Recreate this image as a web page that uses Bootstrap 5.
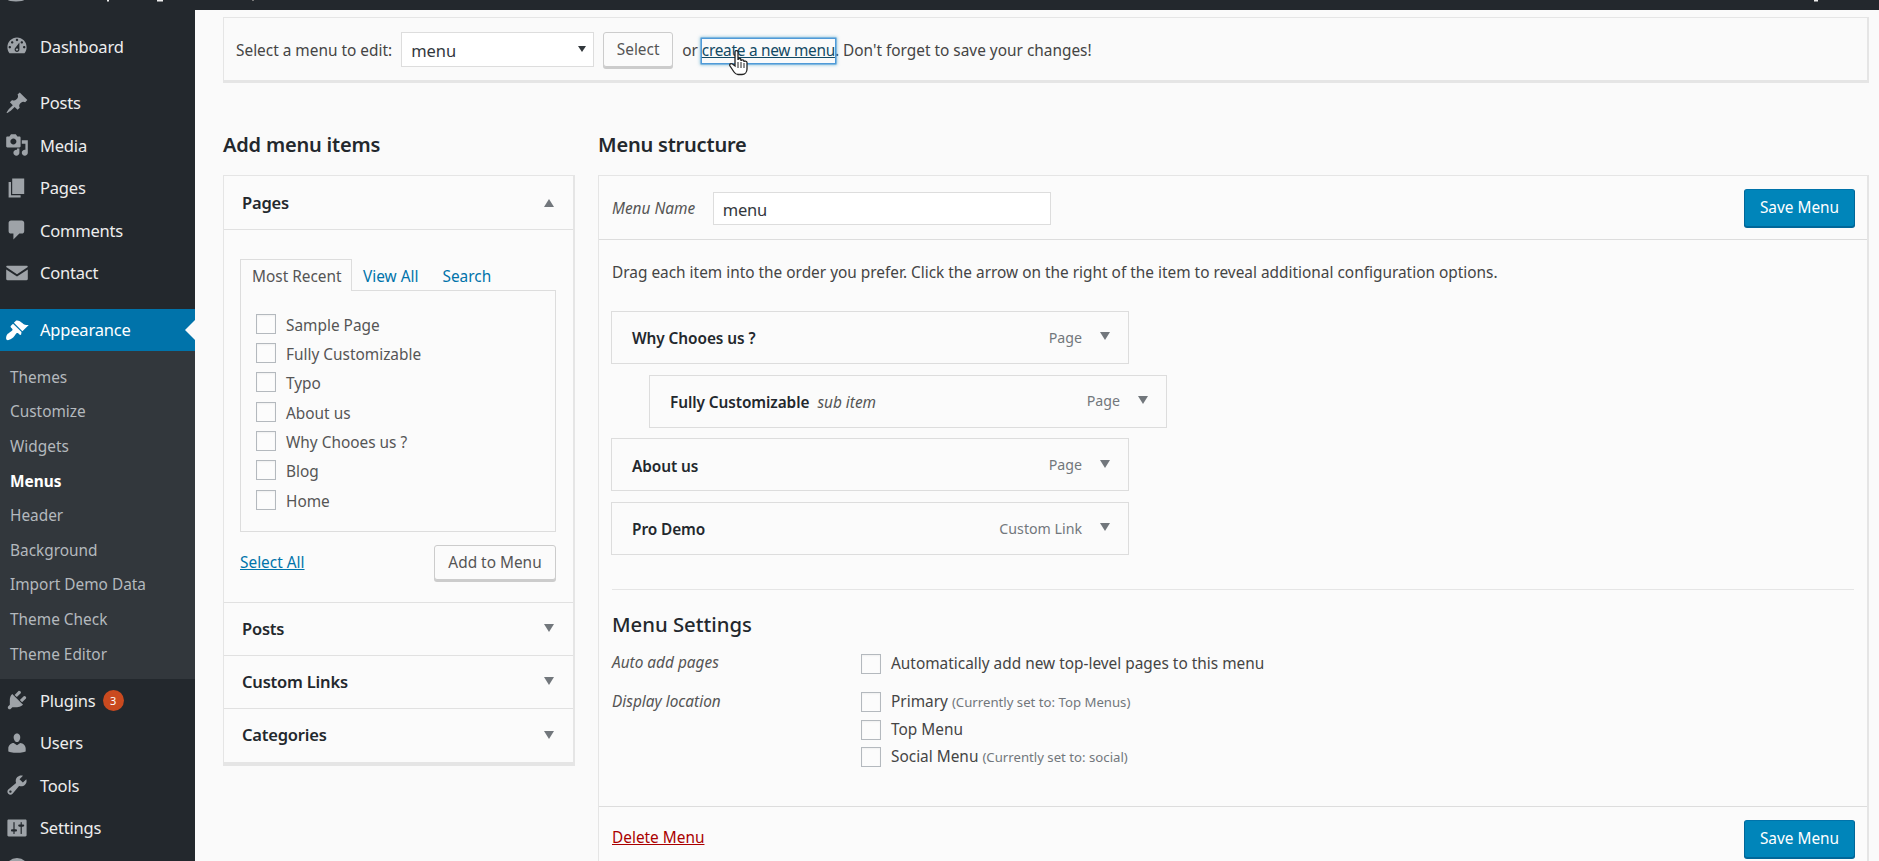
<!DOCTYPE html>
<html lang="en">
<head>
<meta charset="utf-8">
<title>Menus</title>
<link href="https://cdn.jsdelivr.net/npm/bootstrap@5.3.0/dist/css/bootstrap.min.css" rel="stylesheet">
<style>
:root{--ff:"Noto Sans","Open Sans",sans-serif;}
html,body{height:100%;}
body{font-family:var(--ff);font-size:15.4px;color:#444;background:#fafafa;line-height:1.3;}
.wp-top{height:10px;background:#23282d;flex:none;overflow:hidden;}
.wp-top svg{display:block;width:100%;height:10px;}
.wp-side{width:195px;background:#23282d;color:#eee;padding-top:15px;font-size:16.5px;letter-spacing:-.2px;}
.side-row{display:flex;align-items:center;height:42.5px;padding-left:5px;gap:11px;}
.side-row svg{width:24px;height:24px;fill:#9ea3a8;flex:none;}
.side-gap1{margin-top:14px;}
.side-cur{margin-top:14.5px;height:42px;background:#0073aa;color:#fff;position:relative;}
.side-cur svg{fill:#fff;}
.side-cur::after{content:"";position:absolute;right:0;top:50%;margin-top:-10px;border:10px solid transparent;border-right-color:#fafafa;border-left:0;}
.side-sub{background:#32373c;padding:10px 0 7.4px 10px;font-size:15.4px;letter-spacing:0;color:#b4b9be;}
.side-sub div{height:34.6px;display:flex;align-items:center;}
.side-sub .on{color:#fff;font-weight:700;}
.plug-count{display:inline-block;width:21px;height:21px;border-radius:50%;background:#ca4a1f;color:#fff;font-size:11px;line-height:21px;text-align:center;margin-left:-4px;letter-spacing:0;}
.wp-main{min-width:0;padding:7px 10px 0 28px;background:#fafafa;}
.box-top{height:66px;border:1px solid #e5e5e5;border-bottom-width:3px;border-right-width:2px;padding:0 12px;}
.txt-low{padding-top:5px;}
.sel-wrap{position:relative;width:193px;margin-left:9px;}
.sel-wrap::after{content:"";position:absolute;right:8px;top:14px;border-style:solid;border-width:6px 4px 0;border-color:#32373c transparent transparent;}
.sel-wrap select{width:100%;height:35px;appearance:none;border:1px solid #ddd;background:#fff;padding:4px 9px 0;color:#32373c;font-size:16.5px;border-radius:0;font-family:var(--ff);}
.btn-wp{font-size:15.4px;color:#555;background:#fbfbfb;border:1px solid #ccc;border-radius:3px;box-shadow:0 2px 0 #ccc;line-height:1.2;padding:2px 0 0;display:flex;align-items:center;justify-content:center;}
.btn-sel{width:70px;height:35px;margin:0 9px;}
.link-focus{color:#124964;text-decoration:underline;box-shadow:0 0 0 1.5px #4f9ad8,0 0 3px 2px rgba(30,140,190,.5);margin:0 0 0 4px;position:relative;padding:1px 0 2px;letter-spacing:-.27px;}
.hand{position:absolute;left:27px;top:11px;width:20px;height:26px;}
.col-l{width:352px;flex:none;}
.col-r{min-width:0;flex:1;margin-left:23px;}
.h-sec{font-size:20px;font-weight:600;color:#23282d;margin:0;height:92px;padding-top:49px;line-height:26px;letter-spacing:-.2px;}
.panel-l{border:1px solid #e5e5e5;border-right-width:2px;border-bottom-width:4px;background:#fbfbfb;}
.acc-head{height:53px;display:flex;align-items:center;justify-content:space-between;padding:0 19px 1.5px 18px;font-size:16.5px;font-weight:600;letter-spacing:-.2px;color:#23282d;border-bottom:1px solid #e1e1e1;}
.acc-head:last-child{border-bottom:0;}
.acc-pages{height:54px;padding-bottom:0;}
.tri{display:inline-block;border-style:solid;border-width:8px 5px 0;border-color:#72777c transparent transparent;}
.tri-up{border-width:0 5px 8px;border-color:transparent transparent #72777c;}
.acc-body{padding:29px 17px 21px 16px;border-bottom:1px solid #e1e1e1;height:373px;}
.tab-row{display:flex;height:31px;}
.tab-on{width:112px;border:1px solid #ddd;border-bottom:0;background:#fbfbfb;padding:4px 0 0 11px;display:flex;align-items:center;color:#555;margin-bottom:-1px;height:32px;position:relative;z-index:1;}
.tab-off{color:#0073aa;display:flex;align-items:center;padding-top:5px;}
.tab-gap1{margin-left:11px;}
.tab-gap2{margin-left:24px;}
.tab-box{height:242px;border:1px solid #ddd;padding:18px 15px 0;}
.chk-row{display:flex;align-items:center;height:29.33px;gap:10px;color:#555;padding-top:4px;}
.chk-row .cb{margin-top:-4px;}
.cb{appearance:none;-webkit-appearance:none;width:20px;height:20px;border:1px solid #b4b9be;background:#fcfcfc;margin:0;flex:none;box-shadow:inset 0 1px 2px rgba(0,0,0,.05);display:block;}
.sel-foot{margin-top:13px;}
.wp-link{color:#0073aa;text-decoration:underline;padding-top:2px;}
.btn-add{width:122px;height:35px;}
.panel-r{border:1px solid #e5e5e5;border-right-width:2px;border-bottom:0;background:#fbfbfb;}
.mh{height:64px;display:flex;align-items:center;padding:0 12px 0 13px;border-bottom:1px solid #ddd;justify-content:space-between;}
.it{font-style:italic;color:#555;}
.mn-lbl{padding-top:3px;}
.inp{width:338px;height:33px;border:1px solid #ddd;background:#fff;padding:2px 9px 0;font-size:16.5px;color:#32373c;margin:2px 0 0 17.5px;font-family:var(--ff);border-radius:0;letter-spacing:-.2px;}
.btn-save{width:111px;height:38px;background:#0085ba;border:1px solid #006799;border-color:#0073aa #006799 #006799;color:#fff;border-radius:3px;box-shadow:0 1px 0 #006799;font-size:15.4px;padding:0;}
.mb-body{padding:0 13px;height:566px;}
.drag{padding-top:22.5px;height:71px;line-height:20px;}
.m-it{width:518px;height:53px;border:1px solid #ddd;display:flex;align-items:center;justify-content:space-between;padding:0 18px 0 20px;margin:0 0 10.67px -1px;background:#fbfbfb;}
.m-it.sub-it{margin-left:37px;}
.m-it b{font-weight:600;color:#23282d;letter-spacing:-.08px;}
.m-tt{padding-top:4px;}
.m-r{display:flex;align-items:center;gap:18px;color:#72777c;font-size:14.2px;padding-top:1px;}
.m-r .tri{margin-top:-3px;}
.hr-l{border-top:1px solid #e5e5e5;margin-top:34px;}
.h-set{font-size:20.3px;font-weight:500;color:#23282d;margin:21px 0 0;line-height:26px;height:39px;}
.set-row{display:flex;}
.set-row-gap{margin-bottom:11px;}
.set-lbl{width:249px;flex:none;padding-top:3px;}
.set-opt{display:flex;align-items:center;gap:10px;height:27.5px;}
.small-note{font-size:13.2px;color:#72777c;}
.foot-r{height:64px;border-top:1px solid #ddd;display:flex;justify-content:space-between;align-items:center;padding:0 12px 0 13px;}
.del-link{color:#a00;text-decoration:underline;}
</style>
</head>
<body class="d-flex flex-column overflow-hidden">
<div class="wp-top"><svg viewBox="0 0 1879 10" preserveAspectRatio="none"><ellipse cx="16" cy="0" rx="8" ry="1.500" fill="#9ea3a8"/><rect x="107" y="0" width="2" height="1.500" fill="#eee"/><rect x="157" y="0" width="6" height="1.500" fill="#eee"/><rect x="252" y="0" width="2" height="1" fill="#777"/><rect x="1814" y="0" width="4" height="1.500" fill="#eee"/></svg></div>
<div class="d-flex flex-grow-1 overflow-hidden">
<nav class="wp-side flex-shrink-0">
<div class="side-row"><svg viewBox="0 0 20 20"><path d="M3.76 16h12.48c1.1-1.37 1.76-3.11 1.76-5 0-4.42-3.58-8-8-8s-8 3.58-8 8c0 1.89.66 3.63 1.76 5zM10 4c.55 0 1 .45 1 1s-.45 1-1 1-1-.45-1-1 .45-1 1-1zM6 6c.55 0 1 .45 1 1s-.45 1-1 1-1-.45-1-1 .45-1 1-1zm8 0c.55 0 1 .45 1 1s-.45 1-1 1-1-.45-1-1 .45-1 1-1zm-5.37 5.55L12 7v6c0 1.1-.9 2-2 2s-2-.9-2-2c0-.57.24-1.08.63-1.45zM4 10c.55 0 1 .45 1 1s-.45 1-1 1-1-.45-1-1 .45-1 1-1zm12 0c.55 0 1 .45 1 1s-.45 1-1 1-1-.45-1-1 .45-1 1-1zm-5 3c0-.55-.45-1-1-1s-1 .45-1 1 .45 1 1 1 1-.45 1-1z"/></svg>Dashboard</div>
<div class="side-row side-gap1"><svg viewBox="0 0 20 20"><path d="M10.44 3.02l1.82-1.82 6.36 6.35-1.83 1.82c-1.05-.68-2.48-.57-3.41.36l-.75.75c-.92.93-1.04 2.35-.35 3.41l-1.83 1.82-2.41-2.41-2.8 2.79c-.42.42-3.38 2.71-3.8 2.29s1.86-3.39 2.28-3.81l2.79-2.79L4.1 9.36l1.83-1.82c1.05.69 2.48.57 3.4-.36l.75-.75c.93-.92 1.05-2.35.36-3.41z"/></svg>Posts</div>
<div class="side-row"><svg viewBox="0 0 20 20"><path d="M13 11V4c0-.55-.45-1-1-1h-1.67L9 1H5L3.67 3H2c-.55 0-1 .45-1 1v7c0 .55.45 1 1 1h10c.55 0 1-.45 1-1zM7 4.5c1.38 0 2.5 1.12 2.5 2.5S8.38 9.5 7 9.5 4.5 8.38 4.5 7 5.62 4.5 7 4.5zM14 6h5v10.5c0 1.38-1.12 2.5-2.5 2.5S14 17.88 14 16.5s1.12-2.5 2.5-2.5c.17 0 .34.02.5.05V9h-3V6zm-4 8.05V13h2v3.5c0 1.38-1.12 2.5-2.5 2.5S7 17.88 7 16.5 8.12 14 9.5 14c.17 0 .34.02.5.05z"/></svg>Media</div>
<div class="side-row"><svg viewBox="0 0 20 20"><path d="M6 15V2h10v13H6zm-1 1h8v2H3V5h2v11z"/></svg>Pages</div>
<div class="side-row"><svg viewBox="0 0 20 20"><path d="M5 2h9c1.1 0 2 .9 2 2v7c0 1.1-.9 2-2 2h-2l-5 5v-5H5c-1.1 0-2-.9-2-2V4c0-1.1.9-2 2-2z"/></svg>Comments</div>
<div class="side-row"><svg viewBox="0 0 20 20"><path d="M2 4h16c.6 0 1 .4 1 1L10 11 1 5c0-.6.4-1 1-1zM1 7l9 6 9-6v8c0 .6-.4 1-1 1H2c-.6 0-1-.4-1-1z"/></svg>Contact</div>
<div class="side-row side-cur"><svg viewBox="0 0 20 20"><path d="M14.48 11.06L7.41 3.99l1.5-1.5c.5-.56 2.3-.47 3.51.32 1.21.8 1.43 1.28 2.91 2.1 1.18.64 2.45 1.26 4.45.85zm-.71.71L6.7 4.7 4.93 6.47c-.39.39-.39 1.02 0 1.41l1.06 1.06c.39.39.39 1.03 0 1.42-.6.6-1.43 1.11-2.21 1.69-.35.26-.7.53-1.01.84C1.43 13.23.28 16.99 1.43 18.15c.57.57 1.92.35 3.19-.36.91-.51 1.85-1.25 2.42-1.82.31-.31.58-.66.84-1.01.58-.78 1.09-1.61 1.69-2.21.39-.39 1.03-.39 1.42 0l1.06 1.06c.39.39 1.02.39 1.41 0z"/></svg>Appearance</div>
<div class="side-sub">
<div>Themes</div><div>Customize</div><div>Widgets</div><div class="on">Menus</div><div>Header</div><div>Background</div><div>Import Demo Data</div><div>Theme Check</div><div>Theme Editor</div>
</div>
<div class="side-row"><svg viewBox="0 0 20 20"><path d="M13.11 4.36L9.87 7.6 8 5.73l3.24-3.24c.35-.34 1.05-.2 1.56.32.52.51.66 1.21.31 1.55zm-8 1.77l.91-1.12 9.01 9.01-1.19.84c-.71.71-2.63 1.16-3.82 1.16H6.14L4.9 17.26c-.59.59-1.54.59-2.12 0-.59-.58-.59-1.53 0-2.12l1.24-1.24v-3.88c0-1.13.4-3.19 1.09-3.89zm7.26 3.97l3.24-3.24c.34-.35 1.04-.21 1.55.31.52.51.66 1.21.31 1.55l-3.24 3.25z"/></svg>Plugins <span class="plug-count">3</span></div>
<div class="side-row"><svg viewBox="0 0 20 20"><path d="M10 9.25c-2.27 0-2.73-3.44-2.73-3.44C7 4.02 7.82 2 9.97 2c2.16 0 2.98 2.02 2.71 3.81 0 0-.41 3.44-2.68 3.44zm0 2.57L12.72 10c2.39 0 4.52 2.33 4.52 4.53v2.49s-3.65 1.13-7.24 1.13c-3.65 0-7.24-1.13-7.24-1.13v-2.49c0-2.25 1.94-4.48 4.47-4.48z"/></svg>Users</div>
<div class="side-row"><svg viewBox="0 0 20 20"><path d="M16.68 9.77c-1.34 1.34-3.3 1.67-4.95.99l-5.41 6.52c-.99.99-2.59.99-3.58 0s-.99-2.59 0-3.57l6.52-5.42c-.68-1.65-.35-3.61.99-4.95 1.28-1.28 3.12-1.62 4.72-1.06l-2.89 2.89 2.82 2.82 2.86-2.87c.53 1.58.18 3.39-1.08 4.65zM3.81 16.21c.4.39 1.04.39 1.43 0 .4-.4.4-1.04 0-1.43-.39-.4-1.03-.4-1.43 0-.39.39-.39 1.03 0 1.43z"/></svg>Tools</div>
<div class="side-row"><svg viewBox="0 0 20 20"><path fill-rule="evenodd" d="M18 16V4c0-.55-.45-1-1-1H3c-.55 0-1 .45-1 1v12c0 .55.45 1 1 1h14c.55 0 1-.45 1-1zM8 11h1c.55 0 1 .45 1 1s-.45 1-1 1H8v1.5c0 .28-.22.5-.5.5s-.5-.22-.5-.5V13H6c-.55 0-1-.45-1-1s.45-1 1-1h1V5.5c0-.28.22-.5.5-.5s.5.22.5.5V11zm5-2h-1c-.55 0-1-.45-1-1s.45-1 1-1h1V5.5c0-.28.22-.5.5-.5s.5.22.5.5V7h1c.55 0 1 .45 1 1s-.45 1-1 1h-1v5.5c0 .28-.22.5-.5.5s-.5-.22-.5-.5V9z"/></svg>Settings</div>
<div class="side-row"><svg viewBox="0 0 20 20"><circle cx="10" cy="10" r="10"/></svg></div>
</nav>
<main class="wp-main flex-grow-1 overflow-hidden">
<div class="box-top d-flex align-items-center">
<span class="txt-low">Select a menu to edit:</span>
<div class="sel-wrap"><select aria-label="Select a menu to edit"><option>menu</option></select></div>
<button type="button" class="btn btn-wp btn-sel">Select</button>
<span class="txt-low">or</span>
<span class="txt-low"><a href="#" class="link-focus">create a new menu<svg class="hand" viewBox="0 0 20 26"><path d="M6 2c0-2 3-2 3 0v8c0-2 3-2 3 0v1c0-1.600 3-1.600 3 0v1c0-1.400 3-1.200 3 .5V19c0 3-2 5.500-5 5.500H9c-2 0-3-1-4-2.500L1 16c-1-2 1-3 2.500-2L6 16z" fill="#fff" stroke="#222" stroke-width="1.300"/><path d="M9 12v6M12 12v6M15 13v5" stroke="#222" stroke-width="1"/></svg></a>. Don't forget to save your changes!</span>
</div>
<div class="d-flex">
<div class="col-l">
<h2 class="h-sec">Add menu items</h2>
<div class="panel-l">
<div class="acc-head acc-pages">Pages <span class="tri tri-up"></span></div>
<div class="acc-body">
<div class="tab-row"><span class="tab-on">Most Recent</span><a class="tab-off text-decoration-none tab-gap1" href="#">View All</a><a class="tab-off text-decoration-none tab-gap2" href="#">Search</a></div>
<div class="tab-box">
<label class="chk-row"><input type="checkbox" class="cb">Sample Page</label>
<label class="chk-row"><input type="checkbox" class="cb">Fully Customizable</label>
<label class="chk-row"><input type="checkbox" class="cb">Typo</label>
<label class="chk-row"><input type="checkbox" class="cb">About us</label>
<label class="chk-row"><input type="checkbox" class="cb">Why Chooes us ?</label>
<label class="chk-row"><input type="checkbox" class="cb">Blog</label>
<label class="chk-row"><input type="checkbox" class="cb">Home</label>
</div>
<div class="d-flex justify-content-between align-items-center sel-foot">
<a class="wp-link" href="#">Select All</a>
<button type="button" class="btn btn-wp btn-add">Add to Menu</button>
</div>
</div>
<div class="acc-head">Posts <span class="tri"></span></div>
<div class="acc-head">Custom Links <span class="tri"></span></div>
<div class="acc-head">Categories <span class="tri"></span></div>
</div>
</div>
<div class="col-r">
<h2 class="h-sec">Menu structure</h2>
<div class="panel-r">
<div class="mh">
<div class="d-flex align-items-center"><span class="it mn-lbl">Menu Name</span><input class="inp" value="menu" aria-label="Menu Name"></div>
<button type="button" class="btn btn-save">Save Menu</button>
</div>
<div class="mb-body">
<div class="drag">Drag each item into the order you prefer. Click the arrow on the right of the item to reveal additional configuration options.</div>
<div class="m-it"><b class="m-tt">Why Chooes us ?</b><span class="m-r">Page <span class="tri"></span></span></div>
<div class="m-it sub-it"><span class="m-tt"><b>Fully Customizable</b> <span class="it ms-1">sub item</span></span><span class="m-r">Page <span class="tri"></span></span></div>
<div class="m-it"><b class="m-tt">About us</b><span class="m-r">Page <span class="tri"></span></span></div>
<div class="m-it"><b class="m-tt">Pro Demo</b><span class="m-r">Custom Link <span class="tri"></span></span></div>
<div class="hr-l"></div>
<h3 class="h-set">Menu Settings</h3>
<div class="set-row set-row-gap"><div class="set-lbl it">Auto add pages</div><div><label class="set-opt"><input type="checkbox" class="cb">Automatically add new top-level pages to this menu</label></div></div>
<div class="set-row"><div class="set-lbl it pt-1">Display location</div><div>
<label class="set-opt"><input type="checkbox" class="cb"><span>Primary <span class="small-note">(Currently set to: Top Menus)</span></span></label>
<label class="set-opt"><input type="checkbox" class="cb">Top Menu</label>
<label class="set-opt"><input type="checkbox" class="cb"><span>Social Menu <span class="small-note">(Currently set to: social)</span></span></label>
</div></div>
</div>
<div class="foot-r"><a class="del-link" href="#">Delete Menu</a><button type="button" class="btn btn-save">Save Menu</button></div>
</div>
</div>
</div>
</main>
</div>
<script src="https://cdn.jsdelivr.net/npm/bootstrap@5.3.0/dist/js/bootstrap.bundle.min.js"></script>
</body>
</html>
